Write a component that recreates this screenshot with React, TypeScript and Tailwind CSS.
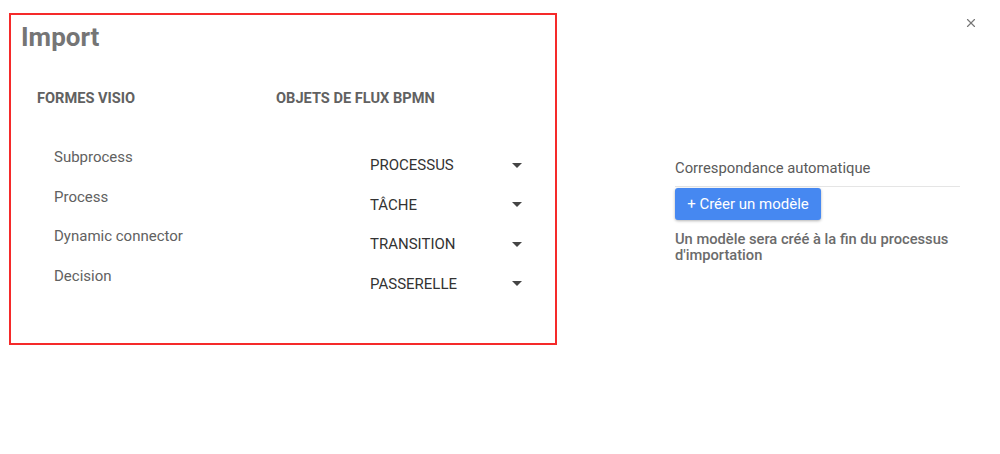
import { X } from "lucide-react";

const mappings = [
  { shape: "Subprocess", bpmn: "PROCESSUS" },
  { shape: "Process", bpmn: "TÂCHE" },
  { shape: "Dynamic connector", bpmn: "TRANSITION" },
  { shape: "Decision", bpmn: "PASSERELLE" },
];

function CaretDown() {
  return (
    <svg width="10" height="5" viewBox="0 0 10 5" className="fill-[#444]">
      <path d="M0 0 L10 0 L5 5 Z" />
    </svg>
  );
}

export default function App() {
  return (
    <div className="relative w-[1000px] h-[454px] bg-white font-['Roboto',sans-serif]">
      {/* Close */}
      <button className="absolute top-[16px] right-[22px] text-[#777]">
        <X className="w-[14px] h-[14px]" strokeWidth={2} />
      </button>

      <div className="flex items-start pt-[13px] pl-[9px]">
        {/* Mapping panel */}
        <div className="w-[548px] h-[332px] border-2 border-[#f52a2a] pl-[10px] pt-[5px]">
          <h1 className="text-[26px] font-bold text-[#757575] leading-[34px]">Import</h1>

          <div className="flex mt-[34px] text-[14.6px] font-bold text-[#616161] leading-[20px]">
            <div className="w-[255px] pl-[16px]">FORMES VISIO</div>
            <div>OBJETS DE FLUX BPMN</div>
          </div>

          <div className="mt-[39px]">
            {mappings.map(m => (
              <div key={m.shape} className="flex h-[39.6px] items-start">
                <div className="w-[349px] pl-[33px] text-[15px] text-[#616161] leading-[20px]">
                  {m.shape}
                </div>
                <div className="flex items-center w-[152px] justify-between mt-[8px] h-[20px]">
                  <span className="text-[15px] text-[#333] leading-[20px]">{m.bpmn}</span>
                  <CaretDown />
                </div>
              </div>
            ))}
          </div>
        </div>

        {/* Auto mapping */}
        <div className="ml-[118px] mt-[145px] w-[285px]">
          <div className="text-[14.8px] text-[#5a5a5a] leading-[20px] pb-[8px] border-b border-[#e5e5e5]">
            Correspondance automatique
          </div>
          <button className="mt-[1px] h-[32px] w-[146px] rounded-[3px] bg-[#4688f1] text-white text-[15px] shadow-[0_1px_3px_rgba(0,0,0,0.3)]">
            + Créer un modèle
          </button>
          <p className="mt-[11px] text-[14.7px] font-medium text-[#6b6b6b] leading-[16px]">
            Un modèle sera créé à la fin du processus
            <br />
            d'importation
          </p>
        </div>
      </div>
    </div>
  );
}
